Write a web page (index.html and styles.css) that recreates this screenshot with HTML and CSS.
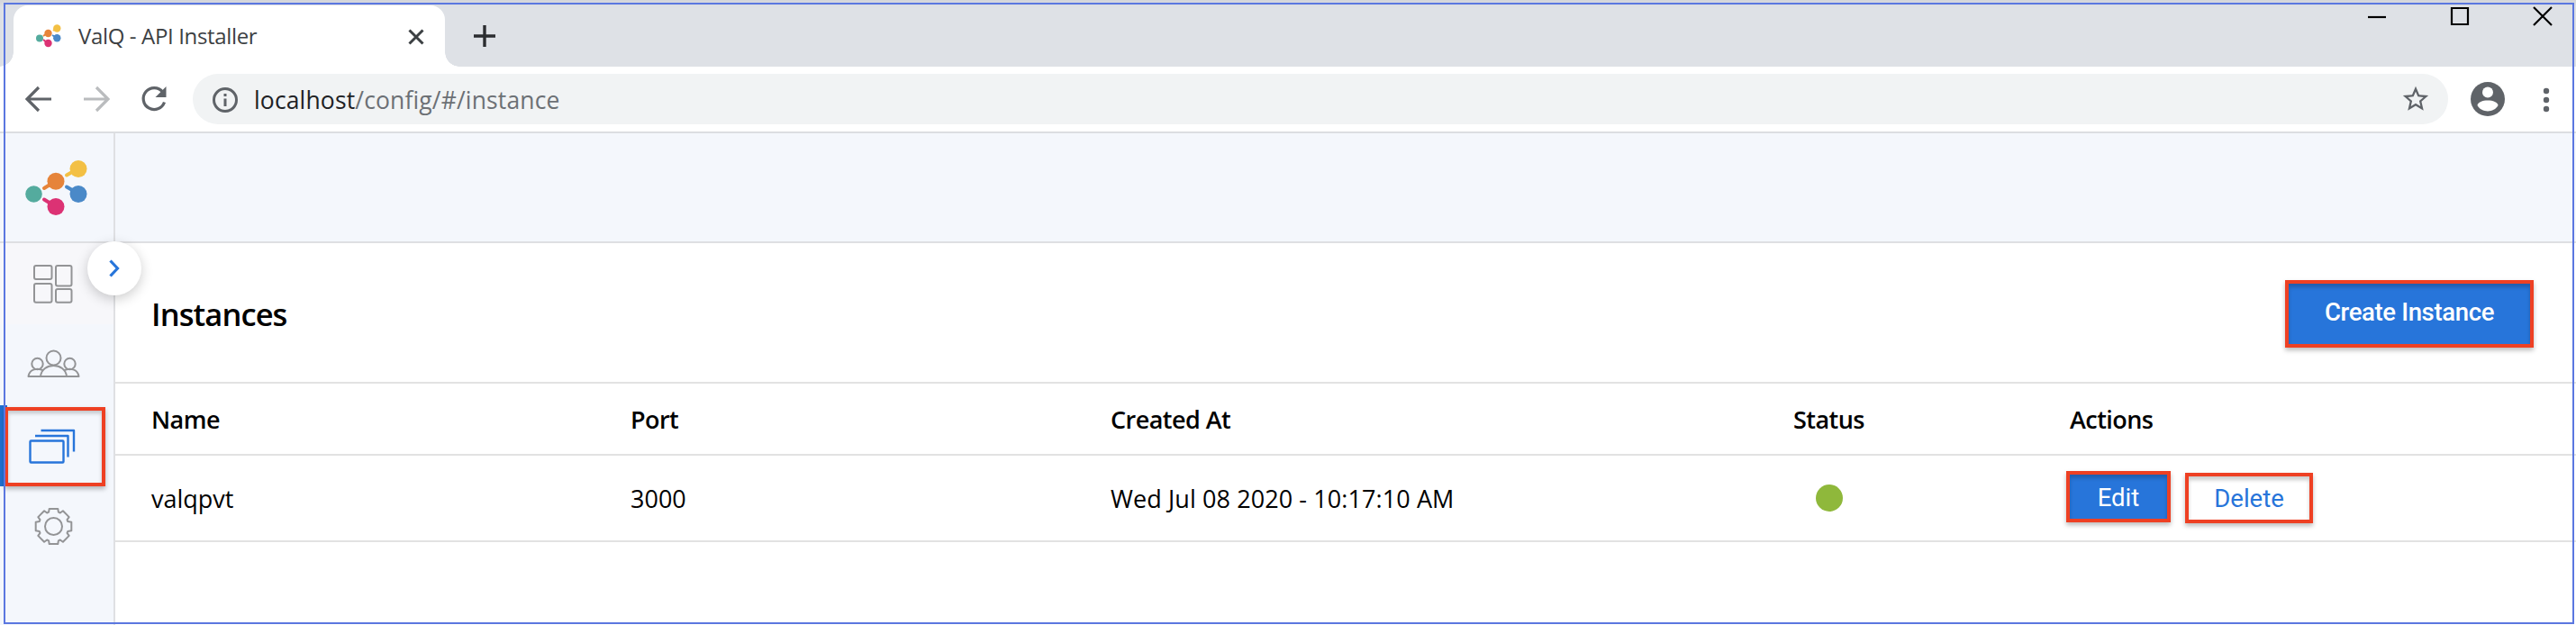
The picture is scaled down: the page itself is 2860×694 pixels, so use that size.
FILE: index.html
```html
<!DOCTYPE html>
<html lang="en">
<head>
<meta charset="utf-8">
<title>ValQ - API Installer</title>
<link rel="stylesheet" href="styles.css">
</head>
<body>
<div class="window">
  <div class="titlebar">
    <div class="tab">
      <svg class="favicon" viewBox="0 0 29 26"><g stroke-width="2"><path d="M19 7 23 4" stroke="#f3c044"/><path d="M8 13 13 9.500" stroke="#e6843a"/><path d="M18 12 23 15" stroke="#4a89c8"/><path d="M8 17 13 21" stroke="#dc3274"/></g><circle cx="23.300" cy="4.500" r="4.200" fill="#f3c044"/><circle cx="13.500" cy="10" r="4.200" fill="#e6843a"/><circle cx="4" cy="15.500" r="4" fill="#54ab9e"/><circle cx="23.300" cy="15.300" r="4.200" fill="#4a89c8"/><circle cx="13.500" cy="21" r="4.200" fill="#dc3274"/></svg>
      <span class="tab-title">ValQ - API Installer</span>
      <svg class="tab-close" viewBox="0 0 18 18"><path d="M1.500 1.500 16.500 16.500M16.500 1.500 1.500 16.500"/></svg>
    </div>
    <svg class="tab-add" viewBox="0 0 24 24"><path d="M12 0V24M0 12H24"/></svg>
    <div class="controls">
      <svg viewBox="0 0 22 22"><path d="M1 12H21"/></svg>
      <svg viewBox="0 0 22 22"><path d="M2 2H20V20H2Z"/></svg>
      <svg viewBox="0 0 22 22"><path d="M1 1 21 21M21 1 1 21"/></svg>
    </div>
  </div>

  <div class="toolbar">
    <svg class="nav back" viewBox="0 0 30 30"><path d="M29 15H2M15 2 2 15 15 28"/></svg>
    <svg class="nav forward" viewBox="0 0 30 30"><path d="M1 15H28M15 2 28 15 15 28"/></svg>
    <svg class="nav reload" viewBox="0 0 30 30"><path d="M24.500 7A12 12 0 1 0 26.500 18.500"/><path class="solid" d="M28.500 1V13H16.500Z"/></svg>
    <div class="address">
      <svg class="info" viewBox="0 0 28 28"><circle cx="14" cy="14" r="12.500"/><path d="M14 12.500V21M14 7V10"/></svg>
      <span class="url"><b>localhost</b>/config/#/instance</span>
      <svg class="star" viewBox="0 0 24 24"><path d="M22 9.240l-7.190-.620L12 2 9.190 8.630 2 9.240l5.460 4.730L5.820 21 12 17.270 18.180 21l-1.630-7.030L22 9.240zM12 15.400l-3.760 2.270 1-4.280-3.320-2.880 4.380-.380L12 6.100l1.710 4.040 4.380.380-3.320 2.880 1 4.280L12 15.400z"/></svg>
    </div>
    <svg class="avatar" viewBox="0 0 38 38"><circle cx="19" cy="19" r="19" fill="#5f6368"/><circle cx="19" cy="11.500" r="6" fill="#fff"/><path d="M7.500 26C8 18.500 30 18.500 30.500 26C26 34.500 12 34.500 7.500 26Z" fill="#fff"/></svg>
    <svg class="more" viewBox="0 0 8 28"><circle cx="4" cy="4" r="3.200"/><circle cx="4" cy="14" r="3.200"/><circle cx="4" cy="24" r="3.200"/></svg>
  </div>

  <div class="app">
    <aside class="sidebar">
      <div class="brand">
        <svg class="logo" viewBox="27 177 70 63">
          <g stroke-width="4" stroke-linecap="round">
            <path d="M74 194.500 87 187" stroke="#f3c044"/><path d="M49 209 62 201" stroke="#e6843a"/>
            <path d="M74 207.500 87 215" stroke="#4a89c8"/><path d="M49 221.500 62 229.500" stroke="#dc3274"/>
          </g>
          <circle cx="87" cy="187.500" r="9.500" fill="#f3c044"/><circle cx="62" cy="201.300" r="9.500" fill="#e6843a"/>
          <circle cx="37.500" cy="215.500" r="9.300" fill="#54ab9e"/><circle cx="87" cy="215.500" r="9.500" fill="#4a89c8"/>
          <circle cx="62" cy="229.500" r="9.500" fill="#dc3274"/>
        </svg>
      </div>
      <nav class="menu">
        <a class="item tint"><svg viewBox="0 0 60 46"><rect x="9" y="3" width="19.500" height="15" rx="2"/><rect x="9" y="23" width="19.500" height="20.700" rx="2"/><rect x="33" y="3" width="17.500" height="22.500" rx="2"/><rect x="33" y="29" width="17.500" height="14.700" rx="2"/></svg></a>
        <a class="item"><svg viewBox="0 0 60 46"><circle cx="30.500" cy="15.500" r="8"/><circle cx="12.500" cy="22" r="6.200"/><circle cx="48.500" cy="22" r="6.200"/><path d="M16 36C17.500 20 43.500 20 45 36ZM16 36H2.500C3.500 28.500 12 25.500 19.500 29.500M45 36H58.500C57.500 28.500 49 25.500 41.500 29.500"/></svg></a>
        <a class="item active"><svg viewBox="0 0 60 46"><rect x="4.500" y="17.500" width="37" height="24" rx="1"/><path d="M10 12H46.500V35.500M16.500 6H53V29.500"/></svg></a>
        <a class="item"><svg viewBox="-30.500 -22.500 60 46"><circle r="9.500"/><path d="M-4.800-19.500H4.800L5.400-15.800L7.300-15L10.400-17.200L17.200-10.400L15-7.300L15.800-5.400L19.800-4.800V4.800L15.800 5.400L15 7.300L17.200 10.400L10.400 17.200L7.300 15L5.400 15.800L4.800 19.500H-4.800L-5.400 15.800L-7.300 15L-10.400 17.200L-17.200 10.400L-15 7.300L-15.800 5.400L-19.800 4.800V-4.800L-15.800-5.400L-15-7.300L-17.200-10.400L-10.400-17.200L-7.300-15L-5.400-15.800Z"/></svg></a>
      </nav>
      <button class="toggle"><svg viewBox="0 0 12 20"><path d="M1.500 1.500 9.500 10 1.500 18.500"/></svg></button>
    </aside>
    <main class="content">
      <div class="topband"></div>
      <header class="heading">
        <h1>Instances</h1>
        <button class="btn primary marked create">Create Instance</button>
      </header>
      <div class="row head">
        <span>Name</span><span>Port</span><span>Created At</span><span class="status">Status</span><span class="last">Actions</span>
      </div>
      <div class="row entry">
        <span>valqpvt</span><span>3000</span><span class="date">Wed Jul 08 2020 - 10:17:10 AM</span><div class="dot"></div>
        <div class="actions"><button class="btn primary marked edit">Edit</button><button class="btn marked delete">Delete</button></div>
      </div>
    </main>
  </div>
  <div class="frame"></div>
</div>
</body>
</html>
```

FILE: styles.css
```css
*, *::before, *::after { box-sizing: border-box; }
body { margin: 0; background: #fff; color: #000; font-family: "Open Sans", "Noto Sans", sans-serif; }
svg { display: block; flex: none; }
.window { position: relative; width: 2860px; height: 694px; display: flex; flex-direction: column; overflow: hidden; }
.frame { position: absolute; inset: 3px 2px 1px 4px; border: 2px solid #5b77e0; pointer-events: none; }

.titlebar { height: 74px; flex: none; display: flex; align-items: flex-start; padding: 6px 26px 0 15px; background: #dee1e6; box-shadow: inset 0 7px 5px -3px #d3d5da; }
.tab { position: relative; width: 479px; height: 68px; display: flex; align-items: center; padding: 0 23px 0 25px; background: #fff; border-radius: 16px 16px 0 0; }
.tab::before, .tab::after { content: ""; position: absolute; bottom: 0; width: 16px; height: 16px; }
.tab::before { left: -16px; background: radial-gradient(circle at 0 0, transparent 15.5px, #fff 16px); }
.tab::after { right: -16px; background: radial-gradient(circle at 100% 0, transparent 15.5px, #fff 16px); }
.favicon { width: 29px; height: 26px; }
.tab-title { margin-left: 18px; font-size: 24px; line-height: 34px; letter-spacing: -0.35px; white-space: nowrap; color: #3c4043; }
.tab-close { width: 18px; height: 18px; margin: 1px 0 0 auto; stroke: #3c4043; stroke-width: 3; }
.tab-add { width: 24px; height: 24px; margin: 22px 0 0 32px; stroke: #2b2d30; stroke-width: 3.4; }
.controls { display: flex; gap: 70px; margin: 1px 0 0 auto; }
.controls svg { width: 22px; height: 22px; fill: none; stroke: #000; stroke-width: 2.2; }

.toolbar { height: 74px; flex: none; display: flex; align-items: center; padding: 0 29px 0 28px; border-bottom: 2px solid #dcdee1; }
.nav { width: 30px; height: 30px; fill: none; stroke: #5f6368; stroke-width: 3.2; }
.forward { margin-left: 34px; stroke: #babcbe; }
.reload { margin-left: 34px; }
.reload .solid { fill: #5f6368; stroke: none; }
.address { display: flex; align-items: center; width: 2504px; height: 56px; margin-left: 28px; padding: 0 19px 0 22px; border-radius: 28px; background: #f1f3f4; }
.info { width: 28px; height: 28px; margin-top: 2px; fill: none; stroke: #5f6368; stroke-width: 3; }
.url { margin: 1px 0 0 18px; font-size: 26.5px; line-height: 36px; letter-spacing: 0.14px; color: #6c7075; }
.url b { font-weight: 400; color: #202124; }
.star { width: 34px; height: 34px; margin-left: auto; fill: #5f6368; }
.avatar { width: 38px; height: 38px; margin-left: 25px; }
.more { width: 8px; height: 28px; margin: 2px 0 0 auto; fill: #5f6368; }

.app { flex: 1; display: grid; grid-template-columns: 128px 1fr; }
.sidebar { position: relative; border-right: 2px solid #dfe0e3; background: #f4f7fc; }
.brand { height: 122px; padding: 29px 0 0 27px; border-bottom: 2px solid #dedfe2; }
.logo { width: 70px; height: 63px; }
.menu { display: flex; flex-direction: column; }
.item { height: 90px; padding: 22px 0 0 29px; }
.item svg { width: 60px; height: 46px; fill: none; stroke: #939496; stroke-width: 2; stroke-linejoin: round; }
.item.tint { background: #f7f7fa; }
.item.active { position: relative; padding-left: 21px; border-left: 8px solid #1f6fcf; }
.item.active::after { content: ""; position: absolute; left: -3px; top: 2px; width: 112px; height: 88px; border: 4px solid #ee4023; box-shadow: 0 3px 5px #0004, inset 0 3px 4px #0003; }
.item.active svg { stroke: #2775da; stroke-width: 2.4; }
.toggle { position: absolute; left: 97px; top: 120px; width: 60px; height: 60px; padding: 0; border: 0; border-radius: 50%; display: grid; place-items: center; background: #fff; box-shadow: 0 4px 14px #0003; }
.toggle svg { width: 12px; height: 20px; fill: none; stroke: #2775da; stroke-width: 3.2; }

.topband { height: 122px; background: #f4f7fc; border-bottom: 2px solid #dedfe2; }
.heading { height: 156px; display: flex; align-items: center; justify-content: space-between; padding: 3px 47px 0 40px; border-bottom: 2px solid #e2e2e2; }
h1 { margin: 0; font-size: 34.5px; line-height: 48px; font-weight: 600; letter-spacing: -0.9px; }
.row { display: grid; grid-template-columns: 532px 533px 531px 531px 1fr; align-items: center; padding-left: 40px; border-bottom: 2px solid #e2e2e2; font-size: 27px; line-height: 38px; }
.row span { padding-top: 2px; }
.row.head { height: 80px; font-weight: 600; letter-spacing: -0.55px; }
.row.entry { height: 96px; }
.status, .dot { justify-self: center; position: relative; left: 1px; }
.date { letter-spacing: 0.09px; }
.last { margin-left: 3px; }
.dot { width: 30px; height: 30px; border-radius: 50%; background: #8fb83b; }
.actions { display: flex; gap: 16px; align-items: center; margin-left: -1px; }
.btn { padding: 0; border: 0; background: #fff; color: #2775da; font-family: Roboto, "Liberation Sans", sans-serif; font-size: 27.5px; line-height: 32px; white-space: nowrap; }
.btn.primary { background: #2775da; color: #fff; }
.btn.marked { border: 4px solid #ee4023; box-shadow: 0 3px 5px #0004, inset 0 4px 4px #0003; }
.btn.create { width: 276px; height: 75px; padding-bottom: 3px; font-weight: 500; letter-spacing: -0.35px; }
.btn.edit { width: 116px; height: 57px; margin-top: -3px; padding-top: 3px; }
.btn.delete { width: 142px; height: 56px; padding-top: 1px; }
```
